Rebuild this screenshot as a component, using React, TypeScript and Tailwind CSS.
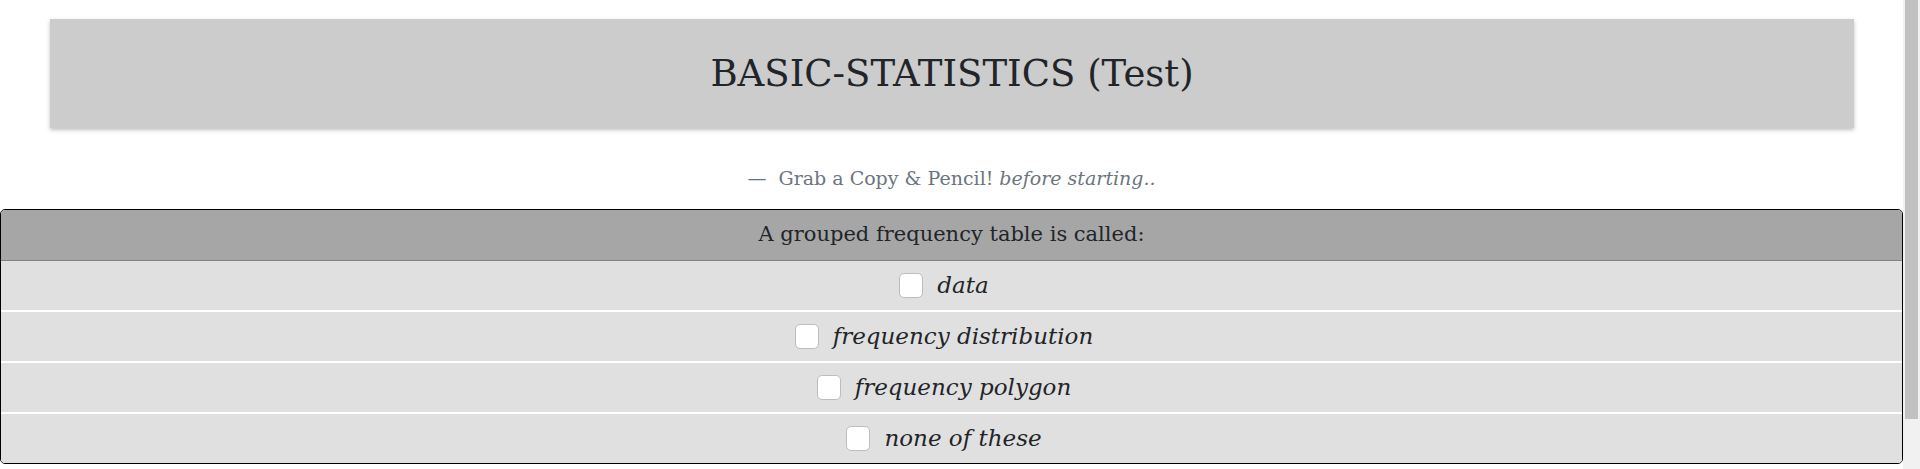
import React from "react";

const serif = { fontFamily: '"DejaVu Serif", "Liberation Serif", serif' };

function Option({ label }: { label: string }) {
  return (
    <div className="flex h-[51px] items-center justify-center border-b-2 border-white bg-[#e0e0e0] pb-[1px] last:h-[49px] last:border-b-0">
      <label className="flex items-center gap-[14px] pr-[15px]">
        <span className="block h-[25px] w-[24px] rounded-[5px] border border-[#bdbdbd] bg-white" />
        <span className="text-[23px] italic text-[#212529]">{label}</span>
      </label>
    </div>
  );
}

export default function App() {
  return (
    <div className="flex h-[469px] overflow-hidden bg-white" style={serif}>
      <div className="min-w-0 flex-1">
        <div className="pt-[19px]">
          <div className="ml-[50px] mr-[49px] flex h-[109px] items-center justify-center bg-[#cccccc] shadow-[0_2px_4px_rgba(0,0,0,0.25)]">
            <h1 className="text-[37px] font-normal text-[#212529]">BASIC-STATISTICS (Test)</h1>
          </div>
        </div>
        <div className="mt-[34px] flex h-[32px] items-center justify-center text-[19px] text-[#6c757d]">
          <span>{"\u2014\u00a0 Grab a Copy & Pencil! "}</span>
          <em className="ml-[6px]">before starting..</em>
        </div>
        <div className="mt-[15px] overflow-hidden rounded-[5px] border border-black">
          <div className="flex h-[51px] items-center justify-center border-b border-[#7f7f7f] bg-[#a6a6a6] text-[21px] text-[#212529]">
            A grouped frequency table is called:
          </div>
          <Option label="data" />
          <Option label="frequency distribution" />
          <Option label="frequency polygon" />
          <Option label="none of these" />
        </div>
      </div>
      <div className="w-[17px] bg-[#f1f1f1] pl-[2px]">
        <div className="h-[419px] w-[13px] bg-[#c1c1c1]" />
      </div>
    </div>
  );
}
